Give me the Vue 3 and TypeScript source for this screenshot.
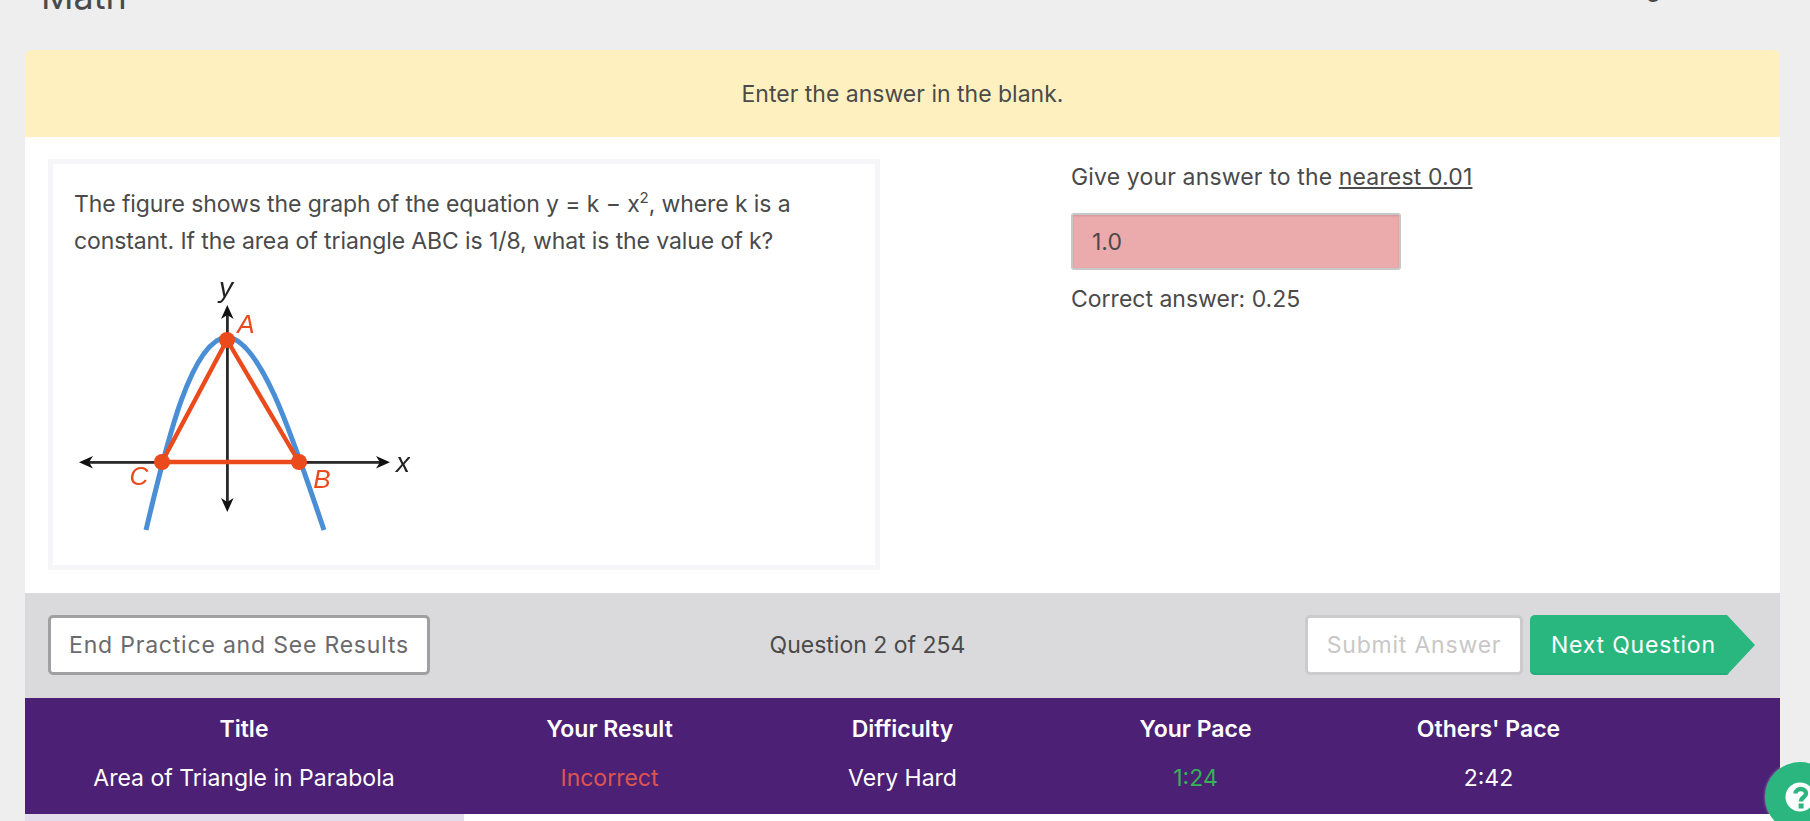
<script setup lang="ts">
const headers = ['Title', 'Your Result', 'Difficulty', 'Your Pace', "Others' Pace"]
const cells = [
  { text: 'Area of Triangle in Parabola', tone: '' },
  { text: 'Incorrect', tone: 'bad' },
  { text: 'Very Hard', tone: '' },
  { text: '1:24', tone: 'good' },
  { text: '2:42', tone: '' }
]
</script>

<template>
  <div class="page">
    <header class="top">
      <span class="subject">Math</span>
      <span class="account">Settings</span>
    </header>
    <main class="card">
      <div class="instruction">Enter the answer in the blank.</div>
      <section class="work">
        <div class="question">
          <p>The figure shows the graph of the equation y = k − x<sup>2</sup>, where k is a constant. If the area of triangle ABC is 1/8, what is the value of k?</p>
          <svg class="figure" width="340" height="260" viewBox="70 280 340 260">
            <g fill="#111">
              <rect x="83" y="461" width="300" height="2.8" fill="#2a2a2a" />
              <rect x="226" y="310" width="2.8" height="198" fill="#2a2a2a" />
              <path d="M79 462.3 L93 456 L89 462.3 L93 468.6 Z" />
              <path d="M390 462.3 L376 456 L380 462.3 L376 468.6 Z" />
              <path d="M227.3 305 L221 319 L227.3 315 L233.6 319 Z" />
              <path d="M227.3 512 L221 498 L227.3 502 L233.6 498 Z" />
            </g>
            <path d="M146 530 C165 450 190 340 227 337 C262 340 295 445 324 530" fill="none" stroke="#4a8fd6" stroke-width="5" />
            <path d="M227 340 L299 462 L162 462 Z" fill="none" stroke="#ea4a1c" stroke-width="4.4" stroke-linejoin="round" />
            <circle cx="227" cy="340" r="8" fill="#ea4a1c" />
            <circle cx="299" cy="462" r="8" fill="#ea4a1c" />
            <circle cx="162" cy="462" r="8" fill="#ea4a1c" />
            <text x="226" y="297" class="axis" text-anchor="middle">y</text>
            <text x="403" y="472" class="axis" text-anchor="middle">x</text>
            <text x="246" y="333" class="pt" text-anchor="middle">A</text>
            <text x="322" y="488" class="pt" text-anchor="middle">B</text>
            <text x="139" y="485" class="pt" text-anchor="middle">C</text>
          </svg>
        </div>
        <div class="answer">
          <p class="prompt">Give your answer to the <u>nearest 0.01</u></p>
          <div class="field">1.0</div>
          <p class="correct">Correct answer: 0.25</p>
        </div>
      </section>
      <nav class="actions">
        <button class="btn end">End Practice and See Results</button>
        <span class="progress">Question 2 of 254</span>
        <div class="right">
          <button class="btn submit">Submit Answer</button>
          <button class="next">Next Question</button>
        </div>
      </nav>
      <section class="stats">
        <div v-for="(h, i) in headers" :key="h" class="col" :class="{ wide: i === 0 }">
          <strong>{{ h }}</strong>
          <span :class="cells[i].tone">{{ cells[i].text }}</span>
        </div>
      </section>
      <div class="tail"><div class="fill"></div></div>
    </main>
    <div class="help" aria-label="Help">
      <svg width="30" height="30" viewBox="0 0 30 30">
        <circle cx="15" cy="15" r="14.5" fill="#fff" />
        <path d="M10.5 11.5 C10.5 5.5 21 5.5 21 11.5 C21 15.5 16 15 16 19.5" fill="none" stroke="#2bb67f" stroke-width="4.4" />
        <rect x="13.6" y="21.5" width="5" height="5" fill="#2bb67f" />
      </svg>
    </div>
  </div>
</template>

<style>
html, body { margin: 0; background: #eeeeee; overflow: hidden; }
</style>

<style scoped>
.page {
  position: relative;
  width: 1810px;
  height: 821px;
  overflow: hidden;
  background: #eeeeee;
  color: #4a4a4a;
  font-family: Inter, "Noto Sans", sans-serif;
  font-size: 23px;
}
.top {
  height: 50px;
  padding: 0 137px 0 41px;
  display: flex;
  justify-content: space-between;
  align-items: flex-start;
}
.subject { font-size: 36px; line-height: 40px; margin-top: -24px; }
.account { line-height: 30px; margin-top: -26px; font-weight: 500; }
.card {
  margin: 0 30px 0 25px;
  display: flex;
  flex-direction: column;
}
.instruction {
  height: 87px;
  border-radius: 6px 6px 0 0;
  background: #fff1bf;
  display: flex;
  align-items: center;
  justify-content: center;
}
.work {
  height: 456px;
  background: #fff;
  display: flex;
  box-sizing: border-box;
  padding: 22px 23px 24px;
}
.question {
  width: 832px;
  height: 411px;
  box-sizing: border-box;
  border: 5px solid #f6f6f8;
  padding: 22px 21px 0;
}
.question p { margin: 0; line-height: 37px; letter-spacing: -0.1px; }
.question sup { font-size: 15px; line-height: 0; }
.figure { display: block; margin: 20px 0 0 -4px; filter: blur(0.4px); }
.axis { font: italic 28px "Liberation Sans", sans-serif; fill: #222; }
.pt { font: italic 26px "Liberation Sans", sans-serif; fill: #ea4a1c; }
.answer { margin-left: 191px; }
.answer p { margin: 0; }
.prompt { line-height: 34px; margin-top: 1px !important; letter-spacing: 0.15px; }
.field {
  width: 330px;
  height: 57px;
  margin-top: 19px;
  box-sizing: border-box;
  border: 2px solid #c8c8c8;
  border-radius: 3px;
  background: #ebaaab;
  box-shadow: inset 0 1px 2px rgba(0, 0, 0, 0.12);
  padding-left: 19px;
  line-height: 55px;
}
.correct { margin-top: 12px !important; line-height: 34px; }
.actions {
  height: 105px;
  box-sizing: border-box;
  background: #dadadc;
  display: flex;
  justify-content: space-between;
  align-items: center;
  padding: 0 25px 1px 23px;
}
.btn {
  height: 60px;
  border-radius: 5px;
  background: #fff;
  font: inherit;
  letter-spacing: 0.8px;
  padding: 0;
  box-sizing: border-box;
}
.end { width: 382px; border: 3px solid #a0a0a3; color: #6a6a6e; }
.right { display: flex; gap: 7px; }
.submit { width: 218px; border: 3px solid #cbcbcd; color: #c9c7c7; }
.next {
  height: 60px;
  width: 225px;
  border: 0;
  padding: 0 0 0 21px;
  text-align: left;
  background: #2ab77f;
  box-shadow: inset 0 -2px 0 #27ad79;
  color: #fff;
  font: inherit;
  letter-spacing: 0.8px;
  clip-path: polygon(0 0, 197px 0, 225px 30px, 197px 60px, 0 60px);
  border-radius: 5px;
}
.stats {
  height: 116px;
  box-sizing: border-box;
  padding-top: 16px;
  background: #4c2074;
  color: #fff;
  display: flex;
  align-items: flex-start;
}
.col {
  width: 293px;
  display: flex;
  flex-direction: column;
  align-items: center;
  gap: 19px;
  line-height: 30px;
}
.col.wide { width: 438px; }
.col strong { font-weight: 600; }
.bad { color: #dc5550; }
.good { color: #34b255; }
.tail { height: 7px; background: #fff; }
.fill { width: 439px; height: 7px; background: #e3dcea; }
.help {
  position: absolute;
  left: 1765px;
  top: 762px;
  width: 70px;
  height: 70px;
  border-radius: 50%;
  background: #2bb67f;
  box-shadow: 0 0 3px rgba(255, 255, 255, 0.5);
  display: flex;
  align-items: center;
  justify-content: center;
}
</style>
